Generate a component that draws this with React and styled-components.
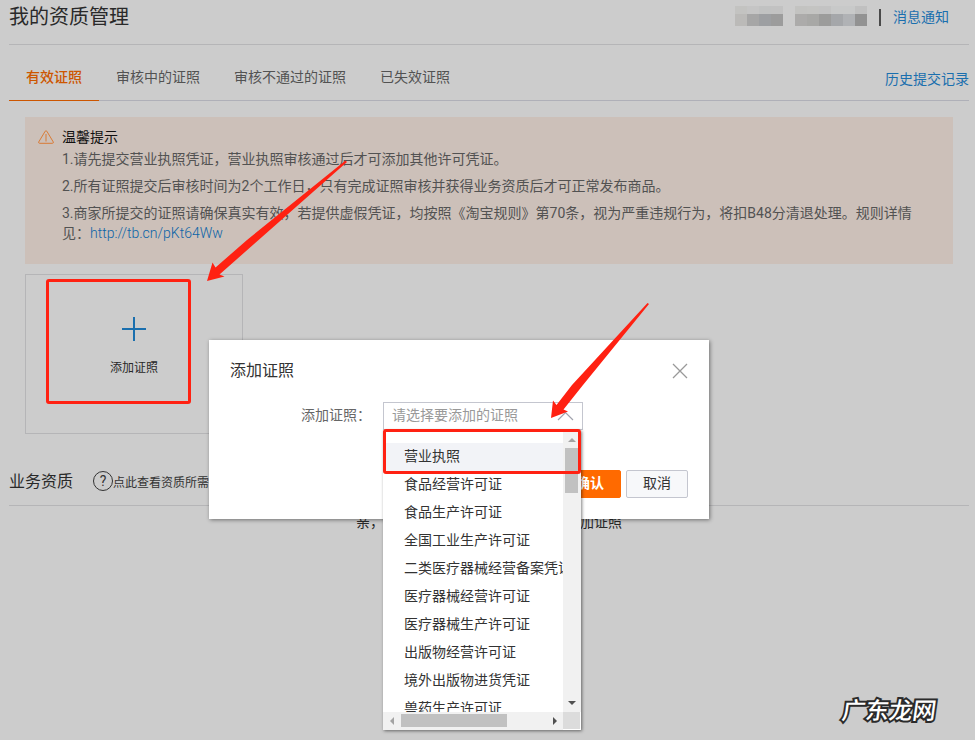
import React, { useState } from 'react';
import styled, { createGlobalStyle, css } from 'styled-components';

const TABS = ['有效证照', '审核中的证照', '审核不通过的证照', '已失效证照'];

const LICENSES = [
  '营业执照',
  '食品经营许可证',
  '食品生产许可证',
  '全国工业生产许可证',
  '二类医疗器械经营备案凭证',
  '医疗器械经营许可证',
  '医疗器械生产许可证',
  '出版物经营许可证',
  '境外出版物进货凭证',
  '兽药生产许可证',
];

// blurred account name, two rows of blocks
const MOSAIC_A = [
  ['#c3c3c1', '#c5c5c5', '#c1c2c2', '#c2c2c2'],
  ['#bbbab8', '#a6a6a6', '#9d9fa2', '#9c9c9c'],
];
const MOSAIC_B = [
  ['#c3c3c1', '#c4c4c2', '#c3c3c3', '#c8c9c9', '#c8c9c9', '#c0c0c0'],
  ['#acabaa', '#a8a8a6', '#9c9c9b', '#a5a7aa', '#b0b2b5', '#929292'],
];

const GlobalStyle = createGlobalStyle`
  body {
    margin: 0;
    background: #ccc;
    overflow: hidden;
    font-family: Roboto, "Noto Sans CJK SC", sans-serif;
    font-size: 14px;
    color: #525252;
  }
`

const Page = styled.div`
  position: relative;
  width: 975px;
  height: 740px;
  box-sizing: border-box;
  padding: 0 6px 0 9px;
  overflow: hidden;
`

const Header = styled.header`
  display: flex;
  justify-content: space-between;
  height: 44px;
  border-bottom: 1px solid #b5b5b7;
`
const PageTitle = styled.h1`
  margin: 0;
  font-size: 20px;
  font-weight: 400;
  line-height: 34px;
  color: #292929;
`
const Account = styled.div`
  display: flex;
  height: 34px;
  align-items: center;
  padding-right: 20px;
`
const Mosaic = styled.div`
  display: grid;
  grid-template-columns: repeat(${props => props.$cols}, 12px);
  grid-template-rows: 8px 12px;
  margin: -2px 12px 0 0;
`
const MosaicCell = styled.i`
  background: ${props => props.$color};
`
const Separator = styled.span`
  width: 2px;
  height: 17px;
  margin-right: 12px;
  background: #4a4a4a;
`
const Link = styled.a`
  color: #1a6fae;
  text-decoration: none;
`
const NewsLink = styled(Link)`
  margin-top: -2px;
`
const RuleLink = styled(Link)`
  color: #0b64a8;
  font-weight: 300;
`

const TabBar = styled.nav`
  display: flex;
  height: 55px;
  border-bottom: 1px solid #afb0b8;
`
const Tab = styled.div`
  height: 55px;
  padding: 0 17px;
  line-height: 64px;
  cursor: pointer;
  ${props => props.$active && css`
    color: #cc5600;
    font-weight: 500;
    border-bottom: 1px solid #cc5600;
  `}
`
const HistoryLink = styled(Link)`
  margin-left: auto;
  line-height: 68px;
`

const Notice = styled.section`
  display: flex;
  height: 147px;
  margin: 16px 16px 0;
  padding: 10px 35px 0 13px;
  box-sizing: border-box;
  background: #ccc0b9;
  line-height: 20px;
  svg {
    flex: none;
    margin: 3px 8px 0 0;
  }
`
const NoticeTitle = styled.div`
  margin-bottom: 2px;
  color: #111;
`
const NoticeText = styled.p`
  margin: 0 0 7px;
`

const AddCard = styled.div`
  display: flex;
  flex-direction: column;
  align-items: center;
  width: 218px;
  height: 160px;
  margin: 10px 0 0 16px;
  padding-top: 42px;
  box-sizing: border-box;
  border: 1px solid #b5b5b7;
  font-size: 12px;
  line-height: 18px;
  color: #292929;
  svg {
    margin-bottom: 18px;
  }
`

const SectionHead = styled.div`
  display: flex;
  align-items: center;
  height: 43px;
  margin-top: 26px;
  padding-bottom: 2px;
  border-bottom: 1px solid #b5b5b7;
  font-size: 12px;
  color: #333;
`
const SectionTitle = styled.h2`
  margin: -4px 20px 0 0;
  font-size: 16px;
  font-weight: 400;
  color: #292929;
`
const HelpIcon = styled.span`
  display: flex;
  align-items: center;
  justify-content: center;
  width: 18px;
  height: 18px;
  margin-top: -2px;
  border: 1px solid #333;
  border-radius: 50%;
  font-size: 14px;
`
const EmptyText = styled.p`
  margin: 6px 0 0;
  line-height: 20px;
  text-align: center;
  color: #292929;
`

const Dialog = styled.div`
  position: absolute;
  left: 209px;
  top: 340px;
  width: 500px;
  height: 179px;
  box-sizing: border-box;
  padding: 20px 21px 21px;
  display: flex;
  flex-direction: column;
  background: #fff;
  box-shadow: 1px 1px 4px rgba(0, 0, 0, .45);
`
const DialogHead = styled.div`
  display: flex;
  justify-content: space-between;
  height: 22px;
  line-height: 21px;
  font-size: 16px;
  color: #333;
  svg {
    margin-top: 3px;
  }
`
const Field = styled.div`
  display: flex;
  align-items: center;
  height: 28px;
  margin-top: 20px;
  padding-left: 71px;
  color: #666;
`
const Label = styled.label`
  width: 82px;
  margin-top: -4px;
`
const Select = styled.div`
  position: relative;
  display: flex;
  align-items: center;
  justify-content: space-between;
  width: 200px;
  height: 28px;
  box-sizing: border-box;
  padding: 0 8px;
  border: 1px solid #c4c6cf;
  color: #999;
`
const Placeholder = styled.span`
  margin-top: -4px;
`
const DialogFoot = styled.div`
  display: flex;
  justify-content: flex-end;
  gap: 5px;
  margin-top: auto;
`
const Button = styled.button`
  width: 62px;
  height: 28px;
  padding: 0 0 4px;
  border: 1px solid ${props => props.$primary ? '#ff6a00' : '#c4c6cf'};
  border-radius: 2px;
  background: ${props => props.$primary ? '#ff6a00' : '#f7f8fa'};
  color: ${props => props.$primary ? '#fff' : '#333'};
  font-family: inherit;
  font-size: 14px;
  font-weight: ${props => props.$primary ? 700 : 400};
`

const Menu = styled.div`
  position: absolute;
  left: -1px;
  top: 27px;
  z-index: 1;
  display: grid;
  grid-template-columns: 180px 18px;
  grid-template-rows: 282px 18px;
  background: #fff;
  box-shadow: 1px 1px 3px rgba(0, 0, 0, .5);
`
const MenuList = styled.ul`
  margin: 0;
  padding: 13px 0 0;
  overflow: hidden;
  list-style: none;
`
const MenuItem = styled.li`
  height: 28px;
  padding-left: 21px;
  line-height: 26px;
  white-space: nowrap;
  color: #333;
  background: ${props => props.$active ? '#f2f3f7' : 'transparent'};
`
const ScrollTrack = styled.div`
  display: flex;
  flex-direction: ${props => props.$vertical ? 'column' : 'row'};
  align-items: center;
  justify-content: space-between;
  box-sizing: border-box;
  padding: ${props => props.$vertical ? '8px 1px 7px 0' : '0 6px 1px 7px'};
  background: #f1f1f1;
`
const ScrollThumb = styled.div`
  width: ${props => props.$vertical ? 13 : 106}px;
  height: ${props => props.$vertical ? 45 : 13}px;
  margin: ${props => props.$vertical ? '6px 0 auto' : '0 auto 0 7px'};
  background: #c1c1c1;
`
const ScrollCorner = styled.div`
  margin: 0 1px 1px 0;
  background: #dcdcdc;
`

const RedBox = styled.div`
  position: absolute;
  left: ${props => props.$x}px;
  top: ${props => props.$y}px;
  width: ${props => props.$w}px;
  height: ${props => props.$h}px;
  box-sizing: border-box;
  border: 3px solid #ff2112;
  border-radius: 3px;
  z-index: 2;
`
const Arrows = styled.svg`
  position: absolute;
  left: 0;
  top: 0;
  z-index: 3;
  pointer-events: none;
`
const Watermark = styled.div`
  position: absolute;
  left: 842px;
  top: 695px;
  font-size: 23.5px;
  line-height: 32px;
  font-weight: 500;
  color: #fff;
  -webkit-text-stroke: 4px #2b2b2b;
  paint-order: stroke fill;
  stroke-linejoin: round;
  transform: skewX(-8deg);
`

function MosaicBlock({ rows }) {
  return (
    <Mosaic $cols={rows[0].length}>
      {rows.flat().map((color, i) => <MosaicCell key={i} $color={color} />)}
    </Mosaic>
  )
}

function Dropdown() {
  return (
    <Menu>
      <MenuList>
        {LICENSES.map((name, i) => (
          <MenuItem key={name} $active={i === 0}>{name}</MenuItem>
        ))}
      </MenuList>
      <ScrollTrack $vertical>
        <svg width="8" height="4"><path d="M0 4L4 0L8 4Z" fill="#a3a3a3" /></svg>
        <ScrollThumb $vertical />
        <svg width="8" height="4"><path d="M0 0H8L4 4Z" fill="#505050" /></svg>
      </ScrollTrack>
      <ScrollTrack>
        <svg width="4" height="8"><path d="M4 0V8L0 4Z" fill="#a3a3a3" /></svg>
        <ScrollThumb />
        <svg width="4" height="8"><path d="M0 0V8L4 4Z" fill="#505050" /></svg>
      </ScrollTrack>
      <ScrollCorner />
    </Menu>
  )
}

function AddDialog() {
  return (
    <Dialog>
      <DialogHead>
        添加证照
        <svg width="16" height="16" fill="none" stroke="#999" strokeWidth="1.3">
          <path d="M1 1L15 15M15 1L1 15" />
        </svg>
      </DialogHead>
      <Field>
        <Label>添加证照：</Label>
        <Select>
          <Placeholder>请选择要添加的证照</Placeholder>
          <svg width="17" height="10" fill="none" stroke="#a0a2ad" strokeWidth="1.2">
            <path d="M1 9L8.5 1.5L16 9" />
          </svg>
          <Dropdown />
        </Select>
      </Field>
      <DialogFoot>
        <Button $primary>确认</Button>
        <Button>取消</Button>
      </DialogFoot>
    </Dialog>
  )
}

const App = () => {
  const [tab, setTab] = useState(0);

  return (
    <Page>
      <GlobalStyle />
      <Header>
        <PageTitle>我的资质管理</PageTitle>
        <Account>
          <MosaicBlock rows={MOSAIC_A} />
          <MosaicBlock rows={MOSAIC_B} />
          <Separator />
          <NewsLink>消息通知</NewsLink>
        </Account>
      </Header>
      <TabBar>
        {TABS.map((name, i) => (
          <Tab key={name} $active={i === tab} onClick={() => setTab(i)}>{name}</Tab>
        ))}
        <HistoryLink>历史提交记录</HistoryLink>
      </TabBar>
      <Notice>
        <svg width="16" height="14" fill="none" stroke="#d97a35">
          <path d="M7.2 1.2Q8 .2 8.8 1.2L15.3 12Q15.6 13.2 14.5 13.3H1.5Q.4 13.2 .7 12ZM8 4V11.5" />
        </svg>
        <div>
          <NoticeTitle>温馨提示</NoticeTitle>
          <NoticeText>1.请先提交营业执照凭证，营业执照审核通过后才可添加其他许可凭证。</NoticeText>
          <NoticeText>2.所有证照提交后审核时间为2个工作日，只有完成证照审核并获得业务资质后才可正常发布商品。</NoticeText>
          <NoticeText>
            3.商家所提交的证照请确保真实有效，若提供虚假凭证，均按照《淘宝规则》第70条，视为严重违规行为，将扣B48分清退处理。规则详情见：<RuleLink>http://tb.cn/pKt64Ww</RuleLink>
          </NoticeText>
        </div>
      </Notice>
      <AddCard>
        <svg width="24" height="24" stroke="#1a6fae" strokeWidth="2">
          <path d="M0 12H24M12 0V24" />
        </svg>
        添加证照
      </AddCard>
      <SectionHead>
        <SectionTitle>业务资质</SectionTitle>
        <HelpIcon>?</HelpIcon>
        点此查看资质所需证照
      </SectionHead>
      <EmptyText>亲，您暂时没有业务资质，请点击添加证照</EmptyText>
      <AddDialog />
      <RedBox $x={46} $y={279} $w={145} $h={125} />
      <RedBox $x={383} $y={429} $w={198} $h={45} />
      <Arrows width="975" height="740" fill="#ff2112">
        <path d="M345.5 160.5L347 162L258 240.5L219.5 274.5L224.5 276.5L207 281L212.5 262.5L215.5 267.5L247 240Z" />
        <path d="M647.5 303L649 304L583 385L563.5 409.5L568 411.5L551 418L553 400.5L556.5 405L572 385Z" />
      </Arrows>
      <Watermark>广东龙网</Watermark>
    </Page>
  )
}

export default App
